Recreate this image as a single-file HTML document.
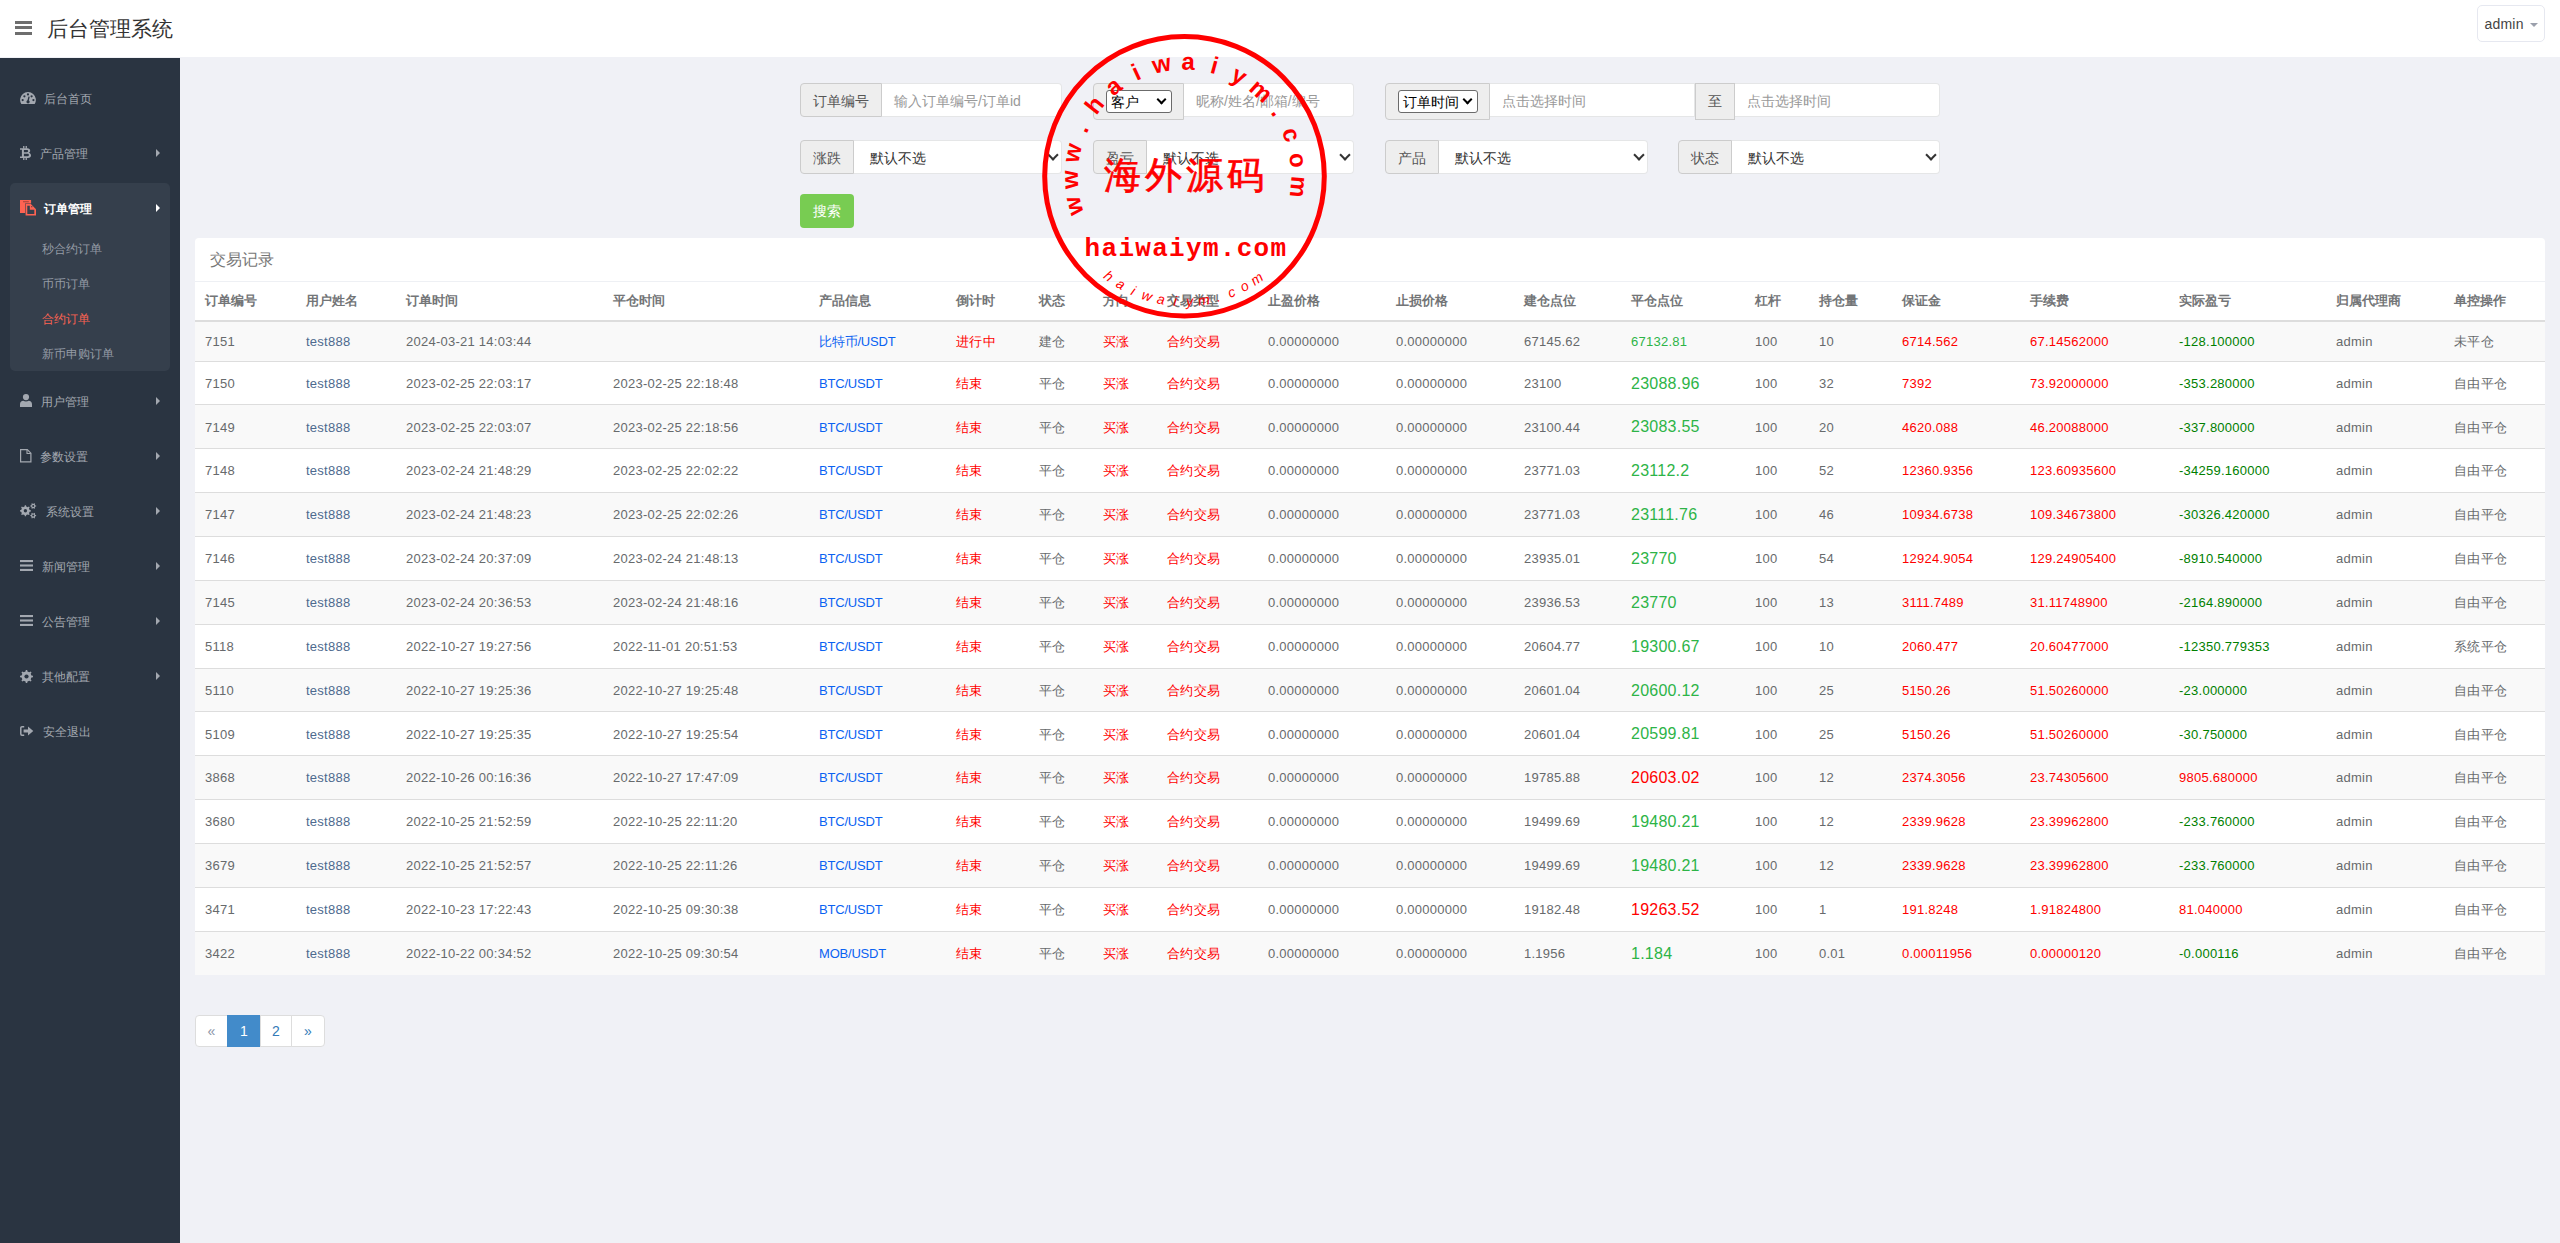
<!DOCTYPE html>
<html><head><meta charset="utf-8">
<style>
*{box-sizing:border-box;margin:0;padding:0}
html,body{width:2560px;height:1243px;overflow:hidden}
body{font-family:"Liberation Sans",sans-serif;background:#f0f1f6;color:#676a6c;font-size:13px;position:relative}
#hdr{position:absolute;left:0;top:0;width:2560px;height:57px;background:#fff}
#hdr .ham{position:absolute;left:15px;top:21px;width:17px;height:14px}
#hdr .ham i{display:block;height:2.8px;background:#6e6e6e;margin-bottom:2.6px}
#hdr .title{position:absolute;left:47px;top:15px;font-size:21px;color:#333;line-height:28px}
#hdr .adm{position:absolute;left:2477px;top:5px;width:68px;height:37px;border:1px solid #e6e8f0;border-radius:5px;font-size:14px;letter-spacing:0.2px;color:#444;line-height:36px;padding-left:6.5px}
#hdr .adm b{position:absolute;left:52px;top:17px;width:0;height:0;border-left:4px solid transparent;border-right:4px solid transparent;border-top:4px solid #9ba0ac}
#side{position:absolute;left:0;top:58px;width:180px;height:1185px;background:#2a3441}
.mi{position:absolute;left:0;width:180px;height:20px;font-size:12px;color:#a3a8b0;line-height:20px}
.mi.sub{color:#959ca6}
.mi svg{position:absolute}
.mi span{position:absolute;top:0}
.mi .car{position:absolute;left:156px;top:5.5px;width:0;height:0;border-top:4px solid transparent;border-bottom:4px solid transparent;border-left:4px solid #a3a8b0}
#grp{position:absolute;left:10px;top:125px;width:160px;height:188px;background:#353f4c;border-radius:5px}
#main{position:absolute;left:180px;top:57px;width:2380px;height:1186px}
.ig{position:absolute;height:34px;display:flex}
.ad{height:34px;background:#eee;border:1px solid #ccc;border-radius:4px 0 0 4px;font-size:14px;color:#555;line-height:34px;padding:0 12px;white-space:nowrap}
.fc{height:34px;background:#fff;border:1px solid #e5e6e7;border-left:0;border-radius:0 4px 4px 0;font-size:14px;color:#999;line-height:34px;padding:0 12px;flex:1;position:relative;white-space:nowrap}
.fc.sel{color:#333}
.fc.sel:after{content:"";position:absolute;right:4.5px;top:9.5px;width:6px;height:6px;border-right:2px solid #333;border-bottom:2px solid #333;transform:rotate(45deg)}
.nsel{display:inline-block;border:1px solid #6b6b6b;border-radius:3px;background:#fff;height:23px;margin-top:6px;font-size:14px;color:#000;line-height:22px;padding-left:4px;position:relative;vertical-align:top}
.nsel:after{content:"";position:absolute;right:6px;top:5px;width:5px;height:5px;border-right:2px solid #000;border-bottom:2px solid #000;transform:rotate(45deg)}
.btn{position:absolute;left:800px;top:194px;width:54px;height:34px;background:#78cc52;border-radius:4px;color:#fff;font-size:14px;line-height:34px;text-align:center}
#card{position:absolute;left:195px;top:238px;width:2350px;height:736.6px;background:#fff;border-radius:4px 4px 0 0;overflow:hidden}
#card .ct{height:44px;border-bottom:1px solid #eef0f4;font-size:16px;color:#777;line-height:43px;padding-left:15px}
table{border-collapse:collapse;table-layout:fixed;width:2350px}
th{font-weight:bold;text-align:left;padding:10px 10px;line-height:18px;font-size:13px;color:#737577;border-bottom:2px solid #ddd;white-space:nowrap}
td{padding:11px 10px 9px;line-height:18.57px;font-size:13px;letter-spacing:0.25px;border-top:1px solid #ddd;white-space:nowrap;vertical-align:middle}
tbody tr:first-child td{border-top:0}
tbody tr:nth-child(odd){background:#f9f9f9}
td.u{color:#4e6a8e}
td.lk{color:#0a62f2;letter-spacing:-0.2px}
td.rd{color:#ff0000}
td.cg{color:#2db447}
td.cr{color:#ff0000}
td.big{font-size:16px;line-height:22.86px}
td.pg{color:#008000}
td.pr{color:#ff0000}
.pag{position:absolute;left:195px;top:1015px;height:32px;display:flex}
.pag span{display:block;height:32px;border:1px solid #ddd;margin-left:-1px;background:#fff;color:#337ab7;font-size:14px;line-height:30px;text-align:center}
#stamp{position:absolute;left:1040px;top:30px;width:290px;height:292px;pointer-events:none}
</style></head><body>
<div id="hdr">
 <div class="ham"><i></i><i></i><i></i></div>
 <div class="title">后台管理系统</div>
 <div class="adm">admin<b></b></div>
</div>
<div id="side">
 <div id="grp"></div>
</div>
<!-- sidebar items -->
<div class="mi" style="top:88.5px"><svg style="left:19.6px;top:3.4px" width="16" height="12.2" viewBox="0 0 15.5 12"><path d="M1.27 12A7.75 7.75 0 1 1 14.23 12Z" fill="#a3a8b0"/><g fill="#2a3441"><circle cx="2.5" cy="7.95" r="1.1"/><circle cx="4.2" cy="4.2" r="1.1"/><circle cx="7.7" cy="2.4" r="1.1"/><circle cx="11.3" cy="4.2" r="1.1"/><circle cx="13.1" cy="7.95" r="1.1"/><circle cx="7.8" cy="9.6" r="1.6"/></g><path d="M7.6 9.6L8.8 4.6" stroke="#2a3441" stroke-width="1.3"/></svg><span style="left:44px">后台首页</span></div>
<div class="mi" style="top:143.5px"><svg style="left:20px;top:2.4px" width="11" height="14" viewBox="0 0 11 14"><path fill="#a3a8b0" fill-rule="evenodd" d="M0 2.3H7.2C9.3 2.3 10.2 3.4 10.2 4.7C10.2 5.8 9.5 6.5 8.7 6.8C10 7.1 11 8 11 9.4C11 11 9.8 11.9 8 11.9H0V10.4H1.9V3.8H0ZM3.9 3.9V6.2H7C7.8 6.2 8.1 5.7 8.1 5C8.1 4.3 7.7 3.9 7 3.9ZM3.9 7.7V10.3H7.5C8.3 10.3 8.9 9.8 8.9 9C8.9 8.2 8.3 7.7 7.5 7.7Z"/><g fill="#a3a8b0"><rect x="3.1" y="0" width="1.3" height="2.6"/><rect x="5.6" y="0" width="1.3" height="2.6"/><rect x="3.1" y="11.6" width="1.3" height="2.4"/><rect x="5.6" y="11.6" width="1.3" height="2.4"/></g></svg><span style="left:40px">产品管理</span><i class="car"></i></div>
<div class="mi" style="top:198.5px;color:#fff;font-weight:bold"><svg style="left:20px;top:1.4px" width="16.5" height="16" viewBox="0 0 16.5 16"><path d="M0 0H11.1V3.4H5.1V13.1H0Z" fill="#fd6352"/><rect x="3" y="1.4" width="5.8" height="0.8" fill="#8a3a35"/><path d="M5.6 4H10.9L16 9.2V15.5H5.6Z" fill="#fd6352"/><path d="M7.3 5.7H9.8V9.7H14.3V13.9H7.3Z" fill="#353f4c"/><circle cx="11.8" cy="6.7" r="0.6" fill="#353f4c"/></svg><span style="left:44px">订单管理</span><i class="car" style="border-left-color:#fff"></i></div>
<div class="mi sub" style="top:238.5px"><span style="left:42px">秒合约订单</span></div>
<div class="mi sub" style="top:273.5px"><span style="left:42px">币币订单</span></div>
<div class="mi" style="top:308.5px;color:#fd6352"><span style="left:42px">合约订单</span></div>
<div class="mi sub" style="top:343.5px"><span style="left:42px">新币申购订单</span></div>
<div class="mi" style="top:391.5px"><svg style="left:20px;top:2.5px" width="12" height="13" viewBox="0 0 12 13"><circle cx="6" cy="3.1" r="3.1" fill="#a3a8b0"/><path d="M0 12.9V10.3C0 8 1.4 6.7 3.3 6.7C4 7.2 5 7.5 6 7.5C7 7.5 8 7.2 8.7 6.7C10.6 6.7 12 8 12 10.3V12.9Z" fill="#a3a8b0"/></svg><span style="left:41px">用户管理</span><i class="car"></i></div>
<div class="mi" style="top:446.5px"><svg style="left:20px;top:2.6px" width="11.5" height="13.5" viewBox="0 0 11.5 13.5"><path d="M0.6 0.6H7.3L10.9 4.2V12.9H0.6Z" fill="none" stroke="#a3a8b0" stroke-width="1.2"/><path d="M7 0.6V4.5H10.9" fill="none" stroke="#a3a8b0" stroke-width="1.1"/></svg><span style="left:40px">参数设置</span><i class="car"></i></div>
<div class="mi" style="top:501.5px"><svg style="left:20px;top:1.5px" width="16.5" height="16" viewBox="0 0 16.5 16"><g fill="#a3a8b0"><path d="M9.62 6.96 L10.87 7.21 L10.87 8.39 L9.62 8.64 L8.98 10.19 L9.69 11.25 L8.85 12.09 L7.79 11.38 L6.24 12.02 L5.99 13.27 L4.81 13.27 L4.56 12.02 L3.01 11.38 L1.95 12.09 L1.11 11.25 L1.82 10.19 L1.18 8.64 L-0.07 8.39 L-0.07 7.21 L1.18 6.96 L1.82 5.41 L1.11 4.35 L1.95 3.51 L3.01 4.22 L4.56 3.58 L4.81 2.33 L5.99 2.33 L6.24 3.58 L7.79 4.22 L8.85 3.51 L9.69 4.35 L8.98 5.41Z"/><path d="M15.33 2.43 L16.17 2.57 L16.17 3.43 L15.33 3.57 L14.76 4.56 L15.06 5.36 L14.31 5.79 L13.77 5.13 L12.63 5.13 L12.09 5.79 L11.34 5.36 L11.64 4.56 L11.07 3.57 L10.23 3.43 L10.23 2.57 L11.07 2.43 L11.64 1.44 L11.34 0.64 L12.09 0.21 L12.63 0.87 L13.77 0.87 L14.31 0.21 L15.06 0.64 L14.76 1.44Z"/><path d="M15.33 12.03 L16.17 12.17 L16.17 13.03 L15.33 13.17 L14.76 14.16 L15.06 14.96 L14.31 15.39 L13.77 14.73 L12.63 14.73 L12.09 15.39 L11.34 14.96 L11.64 14.16 L11.07 13.17 L10.23 13.03 L10.23 12.17 L11.07 12.03 L11.64 11.04 L11.34 10.24 L12.09 9.81 L12.63 10.47 L13.77 10.47 L14.31 9.81 L15.06 10.24 L14.76 11.04Z"/></g><g fill="#2a3441"><circle cx="5.4" cy="7.8" r="1.7"/><circle cx="13.2" cy="3.0" r="1"/><circle cx="13.2" cy="12.6" r="1"/></g></svg><span style="left:46px">系统设置</span><i class="car"></i></div>
<div class="mi" style="top:556.5px"><svg style="left:20px;top:3.5px" width="13" height="11" viewBox="0 0 13 11"><g fill="#a3a8b0"><rect y="0" width="13" height="2.1"/><rect y="4.45" width="13" height="2.1"/><rect y="8.9" width="13" height="2.1"/></g></svg><span style="left:42px">新闻管理</span><i class="car"></i></div>
<div class="mi" style="top:611.5px"><svg style="left:20px;top:3.7px" width="13" height="11" viewBox="0 0 13 11"><g fill="#a3a8b0"><rect y="0" width="13" height="2.1"/><rect y="4.45" width="13" height="2.1"/><rect y="8.9" width="13" height="2.1"/></g></svg><span style="left:42px">公告管理</span><i class="car"></i></div>
<div class="mi" style="top:666.5px"><svg style="left:20px;top:3.4px" width="13" height="13" viewBox="0 0 13 13"><path d="M11.40 5.52 L12.96 5.80 L12.96 7.20 L11.40 7.48 L10.66 9.28 L11.56 10.57 L10.57 11.56 L9.28 10.66 L7.48 11.40 L7.20 12.96 L5.80 12.96 L5.52 11.40 L3.72 10.66 L2.43 11.56 L1.44 10.57 L2.34 9.28 L1.60 7.48 L0.04 7.20 L0.04 5.80 L1.60 5.52 L2.34 3.72 L1.44 2.43 L2.43 1.44 L3.72 2.34 L5.52 1.60 L5.80 0.04 L7.20 0.04 L7.48 1.60 L9.28 2.34 L10.57 1.44 L11.56 2.43 L10.66 3.72Z" fill="#a3a8b0"/><circle cx="6.5" cy="6.5" r="2.1" fill="#2a3441"/></svg><span style="left:42px">其他配置</span><i class="car"></i></div>
<div class="mi" style="top:721.5px"><svg style="left:20px;top:4.7px" width="13.5" height="10" viewBox="0 0 13.5 10"><path d="M4.2 0.8H2A1.2 1.2 0 0 0 0.8 2V8A1.2 1.2 0 0 0 2 9.2H4.2" fill="none" stroke="#a3a8b0" stroke-width="1.5"/><path d="M3.6 3.4H8V0.6L13.3 5L8 9.4V6.6H3.6Z" fill="#a3a8b0"/></svg><span style="left:43px">安全退出</span></div>

<!-- form -->
<div class="ig" style="left:800px;top:83px;width:262px"><div class="ad">订单编号</div><div class="fc">输入订单编号/订单id</div></div>
<div class="ig" style="left:1093px;top:83px;width:261px;height:37px"><div class="ad" style="height:37px;width:91px;padding:0 0 0 12px"><span class="nsel" style="width:66px">客户</span></div><div class="fc" style="height:34px">昵称/姓名/邮箱/编号</div></div>
<div class="ig" style="left:1385px;top:83px;width:555px;height:37px"><div class="ad" style="height:37px;width:105px;padding:0 0 0 12px"><span class="nsel" style="width:80px">订单时间</span></div><div class="fc" style="width:205px;flex:none;border-radius:0">点击选择时间</div><div class="ad" style="height:37px;width:40px;border-radius:0;padding:0;text-align:center;line-height:35px">至</div><div class="fc" style="height:34px">点击选择时间</div></div>
<div class="ig" style="left:800px;top:140px;width:262px"><div class="ad">涨跌</div><div class="fc sel">&nbsp;默认不选</div></div>
<div class="ig" style="left:1093px;top:140px;width:261px"><div class="ad">盈亏</div><div class="fc sel">&nbsp;默认不选</div></div>
<div class="ig" style="left:1385px;top:140px;width:263px"><div class="ad">产品</div><div class="fc sel">&nbsp;默认不选</div></div>
<div class="ig" style="left:1678px;top:140px;width:262px"><div class="ad">状态</div><div class="fc sel">&nbsp;默认不选</div></div>
<div class="btn">搜索</div>

<!-- card -->
<div id="card"><div class="ct">交易记录</div>
<table>
<colgroup><col style="width:101px"><col style="width:100px"><col style="width:207px"><col style="width:206px"><col style="width:137px"><col style="width:83px"><col style="width:64px"><col style="width:64px"><col style="width:101px"><col style="width:128px"><col style="width:128px"><col style="width:107px"><col style="width:124px"><col style="width:64px"><col style="width:83px"><col style="width:128px"><col style="width:149px"><col style="width:157px"><col style="width:118px"><col style="width:101px"></colgroup>
<thead><tr><th>订单编号</th><th>用户姓名</th><th>订单时间</th><th>平仓时间</th><th>产品信息</th><th>倒计时</th><th>状态</th><th>方向</th><th>交易类型</th><th>止盈价格</th><th>止损价格</th><th>建仓点位</th><th>平仓点位</th><th>杠杆</th><th>持仓量</th><th>保证金</th><th>手续费</th><th>实际盈亏</th><th>归属代理商</th><th>单控操作</th></tr></thead>
<tbody>
<tr><td>7151</td><td class="u">test888</td><td>2024-03-21 14:03:44</td><td></td><td class="lk">比特币/USDT</td><td class="rd">进行中</td><td>建仓</td><td class="rd">买涨</td><td class="rd">合约交易</td><td>0.00000000</td><td>0.00000000</td><td>67145.62</td><td class="cg">67132.81</td><td>100</td><td>10</td><td class="rd">6714.562</td><td class="rd">67.14562000</td><td class="pg">-128.100000</td><td>admin</td><td>未平仓</td></tr>
<tr><td>7150</td><td class="u">test888</td><td>2023-02-25 22:03:17</td><td>2023-02-25 22:18:48</td><td class="lk">BTC/USDT</td><td class="rd">结束</td><td>平仓</td><td class="rd">买涨</td><td class="rd">合约交易</td><td>0.00000000</td><td>0.00000000</td><td>23100</td><td class="cg big">23088.96</td><td>100</td><td>32</td><td class="rd">7392</td><td class="rd">73.92000000</td><td class="pg">-353.280000</td><td>admin</td><td>自由平仓</td></tr>
<tr><td>7149</td><td class="u">test888</td><td>2023-02-25 22:03:07</td><td>2023-02-25 22:18:56</td><td class="lk">BTC/USDT</td><td class="rd">结束</td><td>平仓</td><td class="rd">买涨</td><td class="rd">合约交易</td><td>0.00000000</td><td>0.00000000</td><td>23100.44</td><td class="cg big">23083.55</td><td>100</td><td>20</td><td class="rd">4620.088</td><td class="rd">46.20088000</td><td class="pg">-337.800000</td><td>admin</td><td>自由平仓</td></tr>
<tr><td>7148</td><td class="u">test888</td><td>2023-02-24 21:48:29</td><td>2023-02-25 22:02:22</td><td class="lk">BTC/USDT</td><td class="rd">结束</td><td>平仓</td><td class="rd">买涨</td><td class="rd">合约交易</td><td>0.00000000</td><td>0.00000000</td><td>23771.03</td><td class="cg big">23112.2</td><td>100</td><td>52</td><td class="rd">12360.9356</td><td class="rd">123.60935600</td><td class="pg">-34259.160000</td><td>admin</td><td>自由平仓</td></tr>
<tr><td>7147</td><td class="u">test888</td><td>2023-02-24 21:48:23</td><td>2023-02-25 22:02:26</td><td class="lk">BTC/USDT</td><td class="rd">结束</td><td>平仓</td><td class="rd">买涨</td><td class="rd">合约交易</td><td>0.00000000</td><td>0.00000000</td><td>23771.03</td><td class="cg big">23111.76</td><td>100</td><td>46</td><td class="rd">10934.6738</td><td class="rd">109.34673800</td><td class="pg">-30326.420000</td><td>admin</td><td>自由平仓</td></tr>
<tr><td>7146</td><td class="u">test888</td><td>2023-02-24 20:37:09</td><td>2023-02-24 21:48:13</td><td class="lk">BTC/USDT</td><td class="rd">结束</td><td>平仓</td><td class="rd">买涨</td><td class="rd">合约交易</td><td>0.00000000</td><td>0.00000000</td><td>23935.01</td><td class="cg big">23770</td><td>100</td><td>54</td><td class="rd">12924.9054</td><td class="rd">129.24905400</td><td class="pg">-8910.540000</td><td>admin</td><td>自由平仓</td></tr>
<tr><td>7145</td><td class="u">test888</td><td>2023-02-24 20:36:53</td><td>2023-02-24 21:48:16</td><td class="lk">BTC/USDT</td><td class="rd">结束</td><td>平仓</td><td class="rd">买涨</td><td class="rd">合约交易</td><td>0.00000000</td><td>0.00000000</td><td>23936.53</td><td class="cg big">23770</td><td>100</td><td>13</td><td class="rd">3111.7489</td><td class="rd">31.11748900</td><td class="pg">-2164.890000</td><td>admin</td><td>自由平仓</td></tr>
<tr><td>5118</td><td class="u">test888</td><td>2022-10-27 19:27:56</td><td>2022-11-01 20:51:53</td><td class="lk">BTC/USDT</td><td class="rd">结束</td><td>平仓</td><td class="rd">买涨</td><td class="rd">合约交易</td><td>0.00000000</td><td>0.00000000</td><td>20604.77</td><td class="cg big">19300.67</td><td>100</td><td>10</td><td class="rd">2060.477</td><td class="rd">20.60477000</td><td class="pg">-12350.779353</td><td>admin</td><td>系统平仓</td></tr>
<tr><td>5110</td><td class="u">test888</td><td>2022-10-27 19:25:36</td><td>2022-10-27 19:25:48</td><td class="lk">BTC/USDT</td><td class="rd">结束</td><td>平仓</td><td class="rd">买涨</td><td class="rd">合约交易</td><td>0.00000000</td><td>0.00000000</td><td>20601.04</td><td class="cg big">20600.12</td><td>100</td><td>25</td><td class="rd">5150.26</td><td class="rd">51.50260000</td><td class="pg">-23.000000</td><td>admin</td><td>自由平仓</td></tr>
<tr><td>5109</td><td class="u">test888</td><td>2022-10-27 19:25:35</td><td>2022-10-27 19:25:54</td><td class="lk">BTC/USDT</td><td class="rd">结束</td><td>平仓</td><td class="rd">买涨</td><td class="rd">合约交易</td><td>0.00000000</td><td>0.00000000</td><td>20601.04</td><td class="cg big">20599.81</td><td>100</td><td>25</td><td class="rd">5150.26</td><td class="rd">51.50260000</td><td class="pg">-30.750000</td><td>admin</td><td>自由平仓</td></tr>
<tr><td>3868</td><td class="u">test888</td><td>2022-10-26 00:16:36</td><td>2022-10-27 17:47:09</td><td class="lk">BTC/USDT</td><td class="rd">结束</td><td>平仓</td><td class="rd">买涨</td><td class="rd">合约交易</td><td>0.00000000</td><td>0.00000000</td><td>19785.88</td><td class="cr big">20603.02</td><td>100</td><td>12</td><td class="rd">2374.3056</td><td class="rd">23.74305600</td><td class="pr">9805.680000</td><td>admin</td><td>自由平仓</td></tr>
<tr><td>3680</td><td class="u">test888</td><td>2022-10-25 21:52:59</td><td>2022-10-25 22:11:20</td><td class="lk">BTC/USDT</td><td class="rd">结束</td><td>平仓</td><td class="rd">买涨</td><td class="rd">合约交易</td><td>0.00000000</td><td>0.00000000</td><td>19499.69</td><td class="cg big">19480.21</td><td>100</td><td>12</td><td class="rd">2339.9628</td><td class="rd">23.39962800</td><td class="pg">-233.760000</td><td>admin</td><td>自由平仓</td></tr>
<tr><td>3679</td><td class="u">test888</td><td>2022-10-25 21:52:57</td><td>2022-10-25 22:11:26</td><td class="lk">BTC/USDT</td><td class="rd">结束</td><td>平仓</td><td class="rd">买涨</td><td class="rd">合约交易</td><td>0.00000000</td><td>0.00000000</td><td>19499.69</td><td class="cg big">19480.21</td><td>100</td><td>12</td><td class="rd">2339.9628</td><td class="rd">23.39962800</td><td class="pg">-233.760000</td><td>admin</td><td>自由平仓</td></tr>
<tr><td>3471</td><td class="u">test888</td><td>2022-10-23 17:22:43</td><td>2022-10-25 09:30:38</td><td class="lk">BTC/USDT</td><td class="rd">结束</td><td>平仓</td><td class="rd">买涨</td><td class="rd">合约交易</td><td>0.00000000</td><td>0.00000000</td><td>19182.48</td><td class="cr big">19263.52</td><td>100</td><td>1</td><td class="rd">191.8248</td><td class="rd">1.91824800</td><td class="pr">81.040000</td><td>admin</td><td>自由平仓</td></tr>
<tr><td>3422</td><td class="u">test888</td><td>2022-10-22 00:34:52</td><td>2022-10-25 09:30:54</td><td class="lk">MOB/USDT</td><td class="rd">结束</td><td>平仓</td><td class="rd">买涨</td><td class="rd">合约交易</td><td>0.00000000</td><td>0.00000000</td><td>1.1956</td><td class="cg big">1.184</td><td>100</td><td>0.01</td><td class="rd">0.00011956</td><td class="rd">0.00000120</td><td class="pg">-0.000116</td><td>admin</td><td>自由平仓</td></tr>
</tbody></table></div>

<!-- pagination -->
<div class="pag"><span style="width:33px;margin-left:0;border-radius:4px 0 0 4px;color:#8a94a6">&laquo;</span><span style="width:34px;background:#428bca;border-color:#428bca;color:#fff">1</span><span style="width:32px">2</span><span style="width:34px;border-radius:0 4px 4px 0">&raquo;</span></div>

<svg id="stamp" style="position:absolute;left:1040px;top:30px;overflow:visible" width="290" height="292" viewBox="0 0 290 292">
<circle cx="144.5" cy="146.3" r="139.8" fill="none" stroke="#ff0000" stroke-width="5"/>
<text transform="translate(33.42,176.06) rotate(255.00)" y="8.3" text-anchor="middle" font-family="Liberation Sans" font-weight="bold" font-size="24" fill="#ff0000">w</text>
<text transform="translate(29.55,149.60) rotate(268.35)" y="8.3" text-anchor="middle" font-family="Liberation Sans" font-weight="bold" font-size="24" fill="#ff0000">w</text>
<text transform="translate(31.89,122.97) rotate(281.71)" y="8.3" text-anchor="middle" font-family="Liberation Sans" font-weight="bold" font-size="24" fill="#ff0000">w</text>
<text transform="translate(40.33,97.59) rotate(295.06)" y="8.3" text-anchor="middle" font-family="Liberation Sans" font-weight="bold" font-size="24" fill="#ff0000">.</text>
<text transform="translate(54.39,74.85) rotate(308.41)" y="8.3" text-anchor="middle" font-family="Liberation Sans" font-weight="bold" font-size="24" fill="#ff0000">h</text>
<text transform="translate(73.33,55.97) rotate(321.77)" y="8.3" text-anchor="middle" font-family="Liberation Sans" font-weight="bold" font-size="24" fill="#ff0000">a</text>
<text transform="translate(96.12,41.97) rotate(335.12)" y="8.3" text-anchor="middle" font-family="Liberation Sans" font-weight="bold" font-size="24" fill="#ff0000">i</text>
<text transform="translate(121.52,33.62) rotate(348.47)" y="8.3" text-anchor="middle" font-family="Liberation Sans" font-weight="bold" font-size="24" fill="#ff0000">w</text>
<text transform="translate(148.17,31.36) rotate(361.83)" y="8.3" text-anchor="middle" font-family="Liberation Sans" font-weight="bold" font-size="24" fill="#ff0000">a</text>
<text transform="translate(174.61,35.31) rotate(375.18)" y="8.3" text-anchor="middle" font-family="Liberation Sans" font-weight="bold" font-size="24" fill="#ff0000">i</text>
<text transform="translate(199.43,45.27) rotate(388.53)" y="8.3" text-anchor="middle" font-family="Liberation Sans" font-weight="bold" font-size="24" fill="#ff0000">y</text>
<text transform="translate(221.28,60.69) rotate(401.89)" y="8.3" text-anchor="middle" font-family="Liberation Sans" font-weight="bold" font-size="24" fill="#ff0000">m</text>
<text transform="translate(238.98,80.73) rotate(415.24)" y="8.3" text-anchor="middle" font-family="Liberation Sans" font-weight="bold" font-size="24" fill="#ff0000">.</text>
<text transform="translate(251.57,104.33) rotate(428.59)" y="8.3" text-anchor="middle" font-family="Liberation Sans" font-weight="bold" font-size="24" fill="#ff0000">c</text>
<text transform="translate(258.37,130.19) rotate(441.95)" y="8.3" text-anchor="middle" font-family="Liberation Sans" font-weight="bold" font-size="24" fill="#ff0000">o</text>
<text transform="translate(259.01,156.92) rotate(455.30)" y="8.3" text-anchor="middle" font-family="Liberation Sans" font-weight="bold" font-size="24" fill="#ff0000">m</text>
<text transform="translate(68.32,246.66) rotate(37.20)" y="4" text-anchor="middle" font-family="Liberation Sans" font-style="italic" font-size="14" fill="#ff0000">h</text>
<text transform="translate(80.33,254.73) rotate(30.62)" y="4" text-anchor="middle" font-family="Liberation Sans" font-style="italic" font-size="14" fill="#ff0000">a</text>
<text transform="translate(93.18,261.37) rotate(24.04)" y="4" text-anchor="middle" font-family="Liberation Sans" font-style="italic" font-size="14" fill="#ff0000">i</text>
<text transform="translate(106.71,266.50) rotate(17.45)" y="4" text-anchor="middle" font-family="Liberation Sans" font-style="italic" font-size="14" fill="#ff0000">w</text>
<text transform="translate(120.73,270.04) rotate(10.87)" y="4" text-anchor="middle" font-family="Liberation Sans" font-style="italic" font-size="14" fill="#ff0000">a</text>
<text transform="translate(135.07,271.95) rotate(4.29)" y="4" text-anchor="middle" font-family="Liberation Sans" font-style="italic" font-size="14" fill="#ff0000">i</text>
<text transform="translate(149.54,272.20) rotate(-2.29)" y="4" text-anchor="middle" font-family="Liberation Sans" font-style="italic" font-size="14" fill="#ff0000">y</text>
<text transform="translate(163.93,270.79) rotate(-8.87)" y="4" text-anchor="middle" font-family="Liberation Sans" font-style="italic" font-size="14" fill="#ff0000">m</text>
<text transform="translate(178.08,267.74) rotate(-15.45)" y="4" text-anchor="middle" font-family="Liberation Sans" font-style="italic" font-size="14" fill="#ff0000">.</text>
<text transform="translate(191.77,263.10) rotate(-22.04)" y="4" text-anchor="middle" font-family="Liberation Sans" font-style="italic" font-size="14" fill="#ff0000">c</text>
<text transform="translate(204.85,256.91) rotate(-28.62)" y="4" text-anchor="middle" font-family="Liberation Sans" font-style="italic" font-size="14" fill="#ff0000">o</text>
<text transform="translate(217.13,249.26) rotate(-35.20)" y="4" text-anchor="middle" font-family="Liberation Sans" font-style="italic" font-size="14" fill="#ff0000">m</text>
<text x="146" y="158" text-anchor="middle" font-family="Liberation Serif" font-weight="normal" font-size="37" fill="#ff0000" stroke="#ff0000" stroke-width="0.7" letter-spacing="4">海外源码</text>
<text x="146" y="226" text-anchor="middle" font-family="Liberation Mono" font-weight="bold" font-size="26" fill="#ff0000" letter-spacing="1.3">haiwaiym.com</text>
</svg>
</body></html>
